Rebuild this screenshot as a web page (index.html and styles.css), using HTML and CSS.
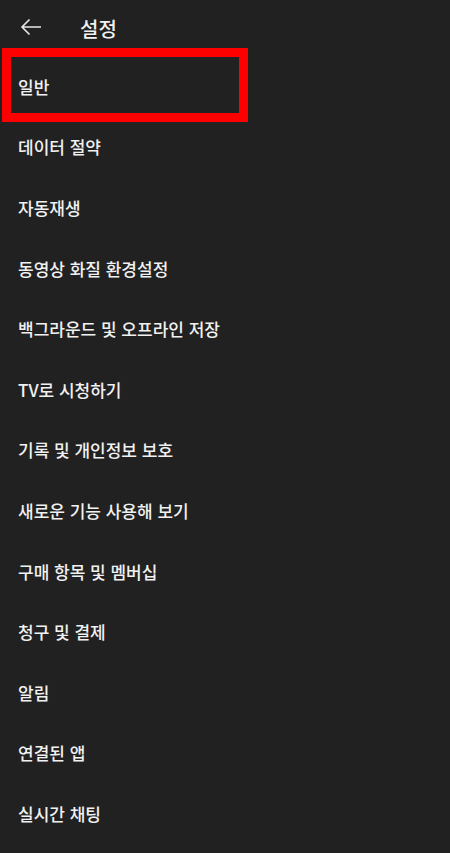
FILE: index.html
```html
<!DOCTYPE html>
<html lang="ko">
<head>
<meta charset="utf-8">
<link rel="stylesheet" href="styles.css">
</head>
<body>
<div class="app">
  <header class="topbar">
    <span class="back">
      <svg width="22" height="18" viewBox="0 0 22 18"><path d="M21 9H2M9.5 1.5L2 9l7.5 7.5" fill="none" stroke="#e8e8e8" stroke-width="1.6"/></svg>
    </span>
    <h1 class="title">설정</h1>
  </header>
  <ul class="menu">
    <li class="item highlighted">일반</li>
    <li class="item">데이터 절약</li>
    <li class="item">자동재생</li>
    <li class="item">동영상 화질 환경설정</li>
    <li class="item">백그라운드 및 오프라인 저장</li>
    <li class="item">TV로 시청하기</li>
    <li class="item">기록 및 개인정보 보호</li>
    <li class="item">새로운 기능 사용해 보기</li>
    <li class="item">구매 항목 및 멤버십</li>
    <li class="item">청구 및 결제</li>
    <li class="item">알림</li>
    <li class="item">연결된 앱</li>
    <li class="item">실시간 채팅</li>
  </ul>
</div>
</body>
</html>
```
FILE: styles.css
```css
html, body {
  margin: 0;
  padding: 0;
  background: #212121;
}
.app {
  width: 450px;
  height: 853px;
  overflow: hidden;
  background: #212121;
  color: #f1f1f1;
  font-family: "Noto Sans CJK KR", "Noto Sans", sans-serif;
}
.topbar {
  height: 56px;
  display: flex;
  align-items: center;
  box-sizing: border-box;
  padding: 0 0 0 20px;
}
.back {
  display: flex;
  width: 60px;
  padding-bottom: 2px;
}
.title {
  margin: 0;
  font-size: 20px;
  font-weight: 500;
  padding-bottom: 0;
}
.menu {
  list-style: none;
  margin: 0;
  padding: 0;
}
.item {
  position: relative;
  height: 60.6px;
  display: flex;
  align-items: center;
  padding-left: 18px;
  font-size: 17px;
  font-weight: 500;
}
.highlighted::after {
  content: "";
  position: absolute;
  left: 2px;
  top: -8px;
  width: 246px;
  height: 74px;
  box-sizing: border-box;
  border: 9px solid #ff0000;
}
```
